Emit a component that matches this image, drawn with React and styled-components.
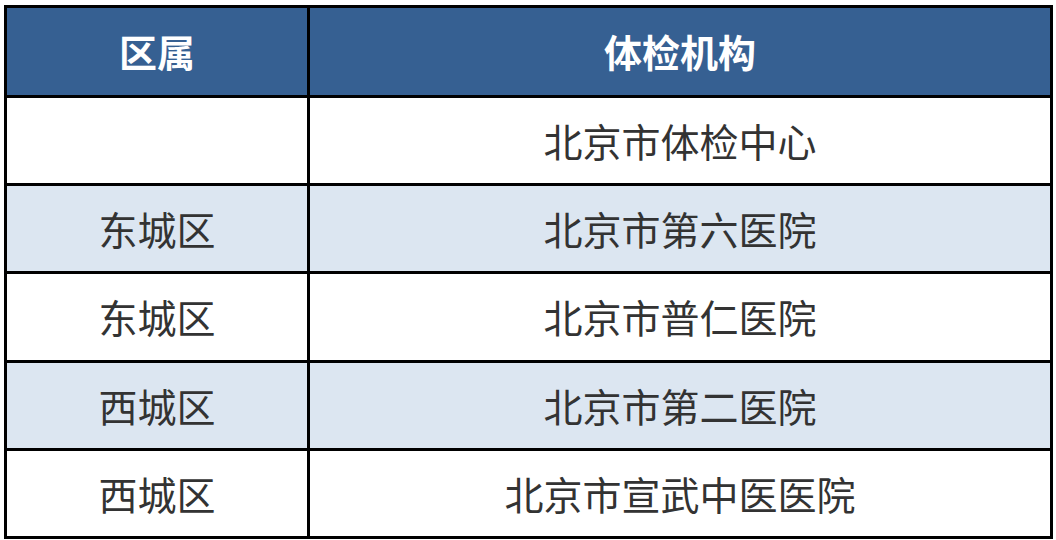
import React from 'react';
import styled, { createGlobalStyle } from 'styled-components';

const GlobalStyle = createGlobalStyle`
  html, body {
    margin: 0;
    padding: 0;
    background: #ffffff;
  }
  body {
    font-family: "Noto Sans CJK SC", "Noto Sans", sans-serif;
  }
`;

const Page = styled.div`
  width: 1056px;
  height: 540px;
  padding: 5px 0 0 4px;
  box-sizing: border-box;
`;

const Table = styled.div`
  width: 1049px;
  height: 534px;
  box-sizing: border-box;
  background: #000000;
  padding: 3px;
  display: grid;
  grid-template-columns: 300px 1fr;
  grid-template-rows: 87px repeat(5, 1fr);
  gap: 3px;
`;

const Cell = styled.div`
  display: flex;
  align-items: center;
  justify-content: center;
  font-size: ${p => (p.$head ? '38px' : '39px')};
  line-height: 1;
  padding-bottom: ${p => (p.$head ? '2px' : '0')};
  box-sizing: border-box;
  background: ${p => (p.$head ? '#366092' : p.$shade ? '#dce6f1' : '#ffffff')};
  color: ${p => (p.$head ? '#ffffff' : '#333333')};
  font-weight: ${p => (p.$head ? 700 : 400)};
`;

const rows = [
  ['', '北京市体检中心'],
  ['东城区', '北京市第六医院'],
  ['东城区', '北京市普仁医院'],
  ['西城区', '北京市第二医院'],
  ['西城区', '北京市宣武中医医院'],
];

export default function App() {
  return (
    <>
      <GlobalStyle />
      <Page>
        <Table>
          <Cell $head>区属</Cell>
          <Cell $head>体检机构</Cell>
          {rows.map((r, i) => (
            <React.Fragment key={i}>
              <Cell $shade={i % 2 === 1}>{r[0]}</Cell>
              <Cell $shade={i % 2 === 1}>{r[1]}</Cell>
            </React.Fragment>
          ))}
        </Table>
      </Page>
    </>
  );
}
